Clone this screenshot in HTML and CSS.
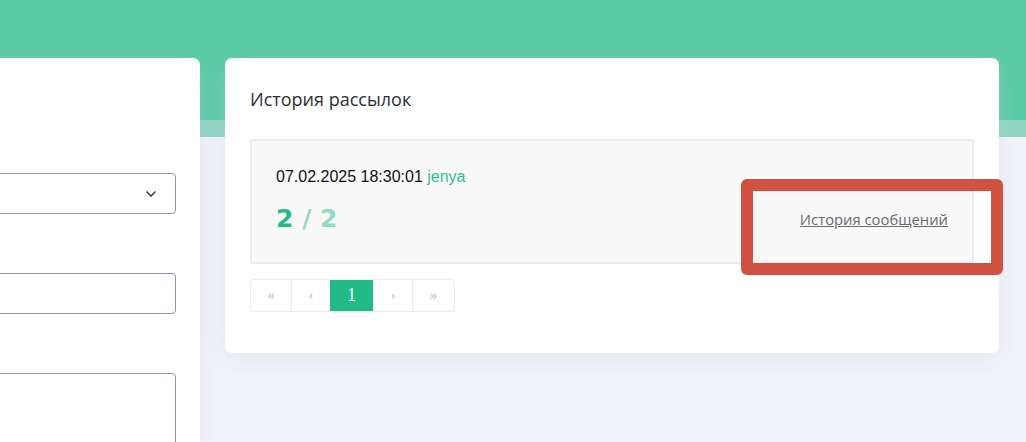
FILE: index.html
```html
<!DOCTYPE html>
<html lang="ru">

<head>
    <meta charset="UTF-8">
    <meta name="viewport" content="width=device-width, initial-scale=1.0">
    <title>История рассылок</title>
    <link rel="stylesheet" href="styles.css">
</head>

<body>
    <div class="top">
        <div class="top-green"></div>
        <div class="top-band"></div>
    </div>
    <div class="page">
        <div class="card form-card">
            <div class="field">
                <div class="select-box">
                    <svg class="chevron" width="12" height="8" viewBox="0 0 12 8">
                        <path d="M1.5 1.5 L6 6 L10.5 1.5" fill="none" stroke="#444" stroke-width="1.6" />
                    </svg>
                </div>
            </div>
            <div class="field">
                <div class="input-box"></div>
            </div>
            <div class="field">
                <div class="textarea-box"></div>
            </div>
        </div>
        <div class="card history-card">
            <h3 class="card-title">История рассылок</h3>
            <div class="mailing">
                <div class="mailing-info">
                    <div class="mailing-date">07.02.2025 18:30:01 <span class="user">jenya</span></div>
                    <div class="mailing-count"><span class="done">2</span> <span class="total">/ 2</span></div>
                </div>
                <a href="#" class="mailing-link">История сообщений</a>
            </div>
            <ul class="pagination">
                <li>&laquo;</li>
                <li>&lsaquo;</li>
                <li class="active">1</li>
                <li>&rsaquo;</li>
                <li>&raquo;</li>
            </ul>
        </div>
    </div>
    <div class="highlight"></div>
</body>

</html>
```

FILE: styles.css
```css
body {
    margin: 0;
    font-family: "Open Sans", sans-serif;
    background-color: #f3f4f9;
    overflow: hidden;
    height: 442px;
}

.top-green {
    height: 120px;
    background-color: #58cba4;
}

.top-band {
    height: 17px;
    background-color: #8ed6c0;
}

.page {
    display: flex;
    align-items: flex-start;
    gap: 25px;
    margin-top: -79px;
    padding-right: 27px;
}

.card {
    background-color: #ffffff;
    border-radius: 7px;
    box-shadow: 0 6px 24px rgba(200, 200, 225, 0.35);
    box-sizing: border-box;
}

.form-card {
    width: 241px;
    margin-left: -41px;
    height: 384px;
    padding: 115px 24px 0 0;
    border-radius: 7px 7px 0 0;
}

.field {
    margin-bottom: 59px;
}

.select-box,
.input-box,
.textarea-box {
    border: 1px solid #8b93a5;
    border-radius: 4px;
    height: 41px;
    box-sizing: border-box;
}

.select-box {
    display: flex;
    align-items: center;
    justify-content: flex-end;
    padding-right: 18px;
}

.textarea-box {
    height: 90px;
}

.history-card {
    flex: 1;
    padding: 27px 25px 41px 25px;
}

.card-title {
    margin: 0 0 26px 0;
    font-size: 18px;
    font-weight: normal;
    color: #2b2f36;
    line-height: 28px;
}

.mailing {
    display: flex;
    justify-content: space-between;
    align-items: flex-end;
    background-color: #f9f9f9;
    border: 2px solid #ececec;
    border-radius: 3px;
    height: 125px;
    box-sizing: border-box;
    padding: 20px 24px 27px 24px;
}

.mailing-date {
    font-family: "Liberation Sans", sans-serif;
    font-size: 16px;
    color: #111;
    line-height: 20px;
}

.user {
    color: #2ebf8f;
}

.mailing-count {
    margin-top: 16px;
    font-family: "DejaVu Sans", sans-serif;
    font-size: 25px;
    font-weight: bold;
    line-height: 32px;
}

.done {
    color: #22bb88;
}

.total {
    color: #8fdcc3;
}

.mailing-link {
    font-size: 14.8px;
    color: #666a70;
    margin-bottom: 6px;
}

.pagination {
    display: flex;
    list-style: none;
    margin: 15px 0 0 0;
    padding: 0;
    width: max-content;
    border: 1px solid #ececec;
    border-radius: 3px;
}

.pagination li {
    height: 31px;
    width: 38px;
    display: flex;
    align-items: center;
    justify-content: center;
    font-family: "Liberation Serif", serif;
    font-size: 15px;
    color: #b8bcc4;
    border-left: 1px solid #ececec;
}

.pagination li:first-child {
    border-left: none;
    width: 40px;
}

.pagination li:last-child {
    width: 41px;
}

.pagination li.active {
    background-color: #22bb88;
    color: #ffffff;
    width: 43px;
    border-left: none;
    font-size: 18px;
}

.highlight {
    position: absolute;
    left: 741px;
    top: 179px;
    width: 262px;
    height: 96px;
    box-sizing: border-box;
    border: 12px solid #d15243;
    border-radius: 6px;
}
```
